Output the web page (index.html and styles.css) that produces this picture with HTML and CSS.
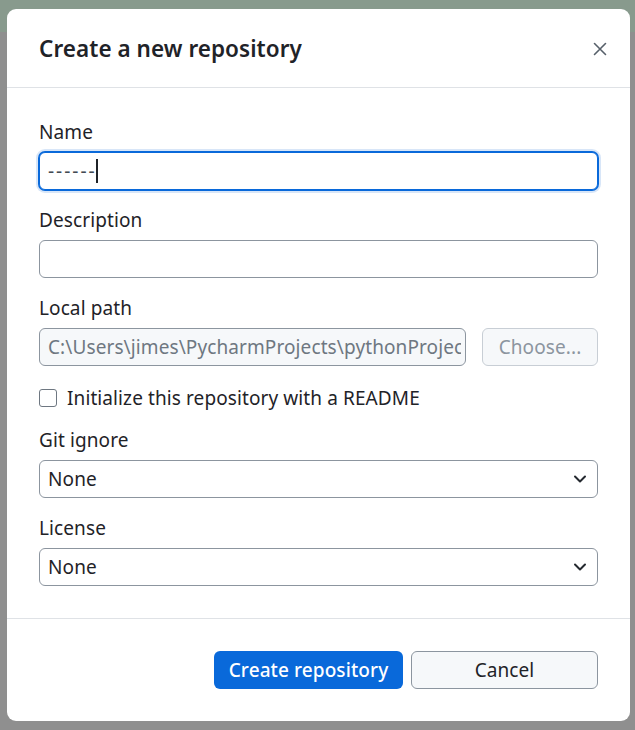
FILE: index.html
```html
<!DOCTYPE html>
<html>
<head>
<meta charset="utf-8">
<link rel="stylesheet" href="styles.css">
</head>
<body>
<div class="backdrop">
  <div class="dialog">
    <div class="dialog-header">
      <h1 class="title">Create a new repository</h1>
      <svg class="close" width="16" height="16" viewBox="0 0 16 16"><path d="M2.5 2.5l11 11M13.5 2.5l-11 11" stroke="#57606a" stroke-width="1.6" fill="none" stroke-linecap="round"/></svg>
    </div>
    <div class="dialog-body">
      <div class="field">
        <label class="label">Name</label>
        <div class="input focused"><span class="dash-text">------</span><span class="caret"></span></div>
      </div>
      <div class="field">
        <label class="label">Description</label>
        <div class="input"></div>
      </div>
      <div class="field">
        <label class="label">Local path</label>
        <div class="path-row">
          <div class="input disabled"><span class="clip">C:\Users\jimes\PycharmProjects\pythonProject</span></div>
          <div class="btn btn-disabled">Choose...</div>
        </div>
      </div>
      <div class="check-row">
        <span class="checkbox"></span>
        <span class="check-label">Initialize this repository with a README</span>
      </div>
      <div class="field">
        <label class="label">Git ignore</label>
        <div class="input select"><span>None</span><svg class="chev" width="14" height="10" viewBox="0 0 14 10"><path d="M2 2.5l5 5 5-5" stroke="#24292f" stroke-width="2" fill="none" stroke-linecap="round" stroke-linejoin="round"/></svg></div>
      </div>
      <div class="field">
        <label class="label">License</label>
        <div class="input select"><span>None</span><svg class="chev" width="14" height="10" viewBox="0 0 14 10"><path d="M2 2.5l5 5 5-5" stroke="#24292f" stroke-width="2" fill="none" stroke-linecap="round" stroke-linejoin="round"/></svg></div>
      </div>
    </div>
    <div class="dialog-footer">
      <div class="btn btn-primary">Create repository</div>
      <div class="btn btn-secondary">Cancel</div>
    </div>
  </div>
</div>
</body>
</html>
```

FILE: styles.css
```css
html, body {
  margin: 0;
  padding: 0;
}
body {
  font-family: "Noto Sans", "Open Sans", sans-serif;
  color: #1f2328;
  width: 635px;
  height: 730px;
  overflow: hidden;
}
.backdrop {
  height: 730px;
  box-sizing: border-box;
  padding: 9px 5px 0 7px;
  background: linear-gradient(#889a8d 0, #889a8d 32px, #8f8f8f 32px);
}
.dialog {
  background: #ffffff;
  border-radius: 9px;
  height: 712px;
  display: flex;
  flex-direction: column;
  overflow: hidden;
}
.dialog-header {
  height: 79px;
  box-sizing: border-box;
  border-bottom: 1px solid #dfe2e6;
  display: flex;
  align-items: center;
  justify-content: space-between;
  padding: 0 22px 0 32px;
}
.title {
  margin: 0;
  font-size: 22.5px;
  font-weight: 600;
  letter-spacing: 0.05px;
  color: #1f2328;
}
.close {
  display: block;
  margin-top: 1px;
}
.dialog-body {
  padding: 33px 32px 32px 32px;
  border-bottom: 1px solid #dfe2e6;
  display: flex;
  flex-direction: column;
}
.field {
  display: flex;
  flex-direction: column;
  margin-bottom: 19px;
}
.field:last-child {
  margin-bottom: 0;
}
.label {
  font-size: 19px;
  letter-spacing: 0.1px;
  line-height: 22px;
  height: 22px;
  margin-bottom: 9px;
  color: #1f2328;
}
.input {
  height: 38px;
  box-sizing: border-box;
  border: 1px solid #8c959f;
  border-radius: 6px;
  display: flex;
  align-items: center;
  padding: 0 8px;
  font-size: 19px;
  letter-spacing: 0.1px;
  color: #1f2328;
  background: #fff;
}
.input.focused {
  border: 1px solid #0969da;
  box-shadow: 0 0 0 1px #0969da, 0 0 0 3px #d8e6f8;
}
.dash-text {
  color: #424a53;
  letter-spacing: 2px;
}
.caret {
  display: inline-block;
  width: 2px;
  height: 24px;
  background: #1f2328;
  margin-left: -1px;
}
.path-row {
  display: flex;
  gap: 16px;
}
.input.disabled {
  flex: 1;
  background: #f6f8fa;
  border-color: #8c959f;
  color: #6e7781;
  overflow: hidden;
  white-space: nowrap;
  padding-right: 4px;
}
.clip {
  overflow: hidden;
  white-space: nowrap;
  display: block;
  width: 100%;
}
.btn {
  height: 38px;
  box-sizing: border-box;
  border-radius: 6px;
  display: flex;
  align-items: center;
  justify-content: center;
  font-size: 19px;
  letter-spacing: 0.1px;
}
.btn-disabled {
  width: 116px;
  background: #f6f8fa;
  border: 1px solid #c8ced5;
  color: #8c959f;
}
.check-row {
  display: flex;
  align-items: center;
  height: 22px;
  margin: 2px 0 20px 0;
}
.checkbox {
  width: 16px;
  height: 16px;
  border: 1.5px solid #6e7781;
  border-radius: 3px;
  box-sizing: content-box;
  margin-right: 10px;
}
.check-label {
  font-size: 19px;
  letter-spacing: 0.1px;
  line-height: 22px;
}
.select {
  justify-content: space-between;
  padding-right: 10px;
}
.chev {
  display: block;
}
.dialog-footer {
  display: flex;
  justify-content: flex-end;
  gap: 8px;
  padding: 32px 32px 0 32px;
}
.btn-primary {
  width: 189px;
  background: #0969da;
  color: #ffffff;
  font-weight: 500;
}
.btn-secondary {
  width: 187px;
  background: #f6f8fa;
  border: 1px solid #8c959f;
  color: #1f2328;
}
```
